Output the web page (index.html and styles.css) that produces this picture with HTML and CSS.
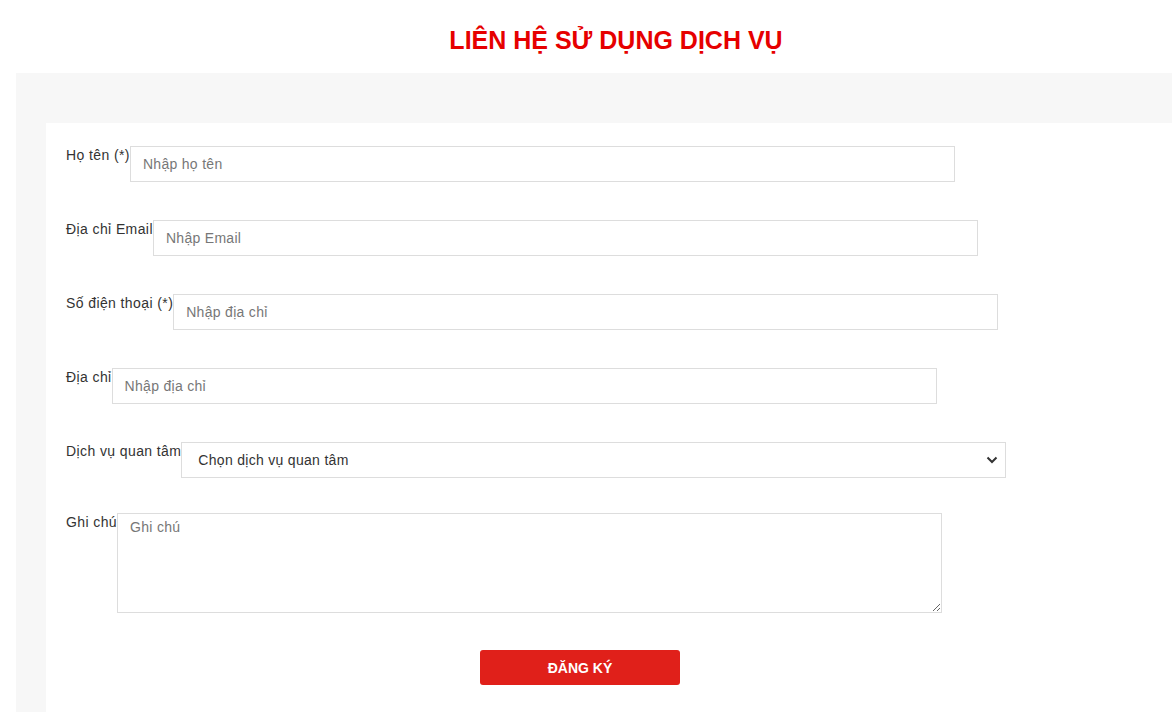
FILE: index.html
```html
<!DOCTYPE html>
<html lang="vi">
<head>
    <meta charset="UTF-8">
    <meta name="viewport" content="width=device-width, initial-scale=1.0">
    <title>Liên hệ sử dụng dịch vụ</title>
    <link rel="stylesheet" href="styles.css">
</head>
<body>
    <div class="page">
        <h1 class="title">LIÊN HỆ SỬ DỤNG DỊCH VỤ</h1>
        <div class="contact-section">
            <form class="contact-card" onsubmit="return false;">
                <div class="form-group">
                    <label for="full-name">Họ tên (*)</label>
                    <input type="text" id="full-name" placeholder="Nhập họ tên">
                </div>
                <div class="form-group">
                    <label for="email">Địa chỉ Email</label>
                    <input type="email" id="email" placeholder="Nhập Email">
                </div>
                <div class="form-group">
                    <label for="phone">Số điện thoại (*)</label>
                    <input type="text" id="phone" placeholder="Nhập địa chỉ">
                </div>
                <div class="form-group">
                    <label for="address">Địa chỉ</label>
                    <input type="text" id="address" placeholder="Nhập địa chỉ">
                </div>
                <div class="form-group select-group">
                    <label for="service">Dịch vụ quan tâm</label>
                    <span class="select-wrap">
                        <select id="service">
                            <option>Chọn dịch vụ quan tâm</option>
                            <option>Thiết kế website</option>
                            <option>Quảng cáo trực tuyến</option>
                        </select>
                        <svg class="select-arrow" width="12" height="8" viewBox="0 0 12 8">
                            <path d="M1.5 1.5 L6 6 L10.5 1.5" fill="none" stroke="#333" stroke-width="2"/>
                        </svg>
                    </span>
                </div>
                <div class="form-group">
                    <label for="note">Ghi chú</label>
                    <textarea id="note" placeholder="Ghi chú"></textarea>
                </div>
                <div class="form-actions">
                    <button type="submit">ĐĂNG KÝ</button>
                </div>
            </form>
        </div>
    </div>
</body>
</html>
```

FILE: styles.css
```css
html, body {
    overflow: hidden;
}

body {
    margin: 0;
    padding: 0;
    font-family: "Liberation Sans", Arial, sans-serif;
    font-size: 14px;
    color: #333;
    background-color: #fff;
}

.page {
    width: 1200px;
    margin-left: 16px;
}

.title {
    margin: 0;
    padding: 26px 0 19px;
    font-size: 25px;
    line-height: 28px;
    font-weight: bold;
    color: #e60000;
    text-align: center;
}

.contact-section {
    background-color: #f7f7f7;
    padding: 50px 0 0 30px;
    min-height: 600px;
}

.contact-card {
    background-color: #fff;
    padding: 23px 20px 60px;
}

.form-group {
    display: flex;
    align-items: flex-start;
    margin-bottom: 38px;
}

.form-group.select-group {
    margin-bottom: 35px;
}

.form-group label {
    padding-top: 1px;
    line-height: 16px;
    letter-spacing: 0.4px;
    white-space: nowrap;
}

.form-group input,
.form-group select,
.form-group textarea {
    width: 825px;
    border: 1px solid #ddd;
    box-sizing: border-box;
    font-family: "Liberation Sans", Arial, sans-serif;
    font-size: 14px;
    letter-spacing: 0.3px;
    color: #333;
    background-color: #fff;
    border-radius: 0;
    outline: none;
}

.form-group input {
    height: 36px;
    padding: 0 12px;
}

.form-group input::placeholder,
.form-group textarea::placeholder {
    color: #777;
}

.select-wrap {
    position: relative;
    display: block;
}

.form-group select {
    height: 36px;
    padding: 0 30px 0 16px;
    appearance: none;
    -webkit-appearance: none;
}

.select-arrow {
    position: absolute;
    right: 8px;
    top: 14px;
    pointer-events: none;
}

.form-group textarea {
    height: 100px;
    padding: 5px 12px;
}

.form-actions {
    width: 1028px;
    display: flex;
    justify-content: center;
    margin-top: -1px;
}

button {
    width: 200px;
    height: 35px;
    background-color: #e0201a;
    color: #fff;
    border: none;
    border-radius: 3px;
    font-family: "Liberation Sans", Arial, sans-serif;
    font-size: 14px;
    font-weight: bold;
    cursor: pointer;
}

button:hover {
    background-color: #c81a14;
}
```
